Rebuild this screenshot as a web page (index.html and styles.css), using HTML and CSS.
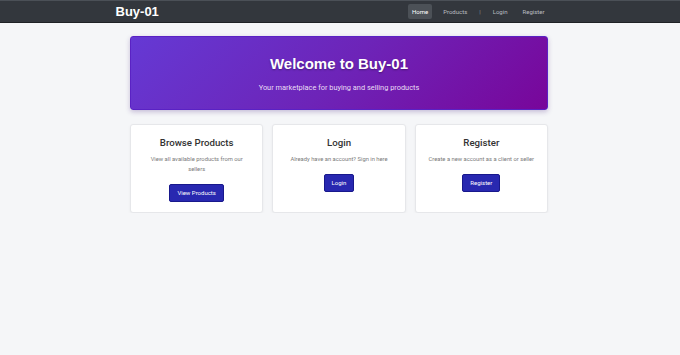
FILE: index.html
```html
<!DOCTYPE html>
<html lang="en">
<head>
    <meta charset="UTF-8">
    <meta name="viewport" content="width=device-width, initial-scale=1.0">
    <title>Buy-01</title>
    <link rel="stylesheet" href="styles.css">
</head>
<body>
    <header class="navbar">
        <div class="nav-inner">
            <a class="brand" href="#">Buy-01</a>
            <nav class="nav-links">
                <a class="active" href="#">Home</a>
                <a href="#">Products</a>
                <span class="sep">|</span>
                <a href="#">Login</a>
                <a href="#">Register</a>
            </nav>
        </div>
    </header>

    <main class="container">
        <section class="hero">
            <h1>Welcome to Buy-01</h1>
            <p>Your marketplace for buying and selling products</p>
        </section>

        <section class="cards">
            <div class="card">
                <h3>Browse Products</h3>
                <p>View all available products from our sellers</p>
                <a class="btn" href="#">View Products</a>
            </div>
            <div class="card">
                <h3>Login</h3>
                <p>Already have an account? Sign in here</p>
                <a class="btn" href="#">Login</a>
            </div>
            <div class="card">
                <h3>Register</h3>
                <p>Create a new account as a client or seller</p>
                <a class="btn" href="#">Register</a>
            </div>
        </section>
    </main>
</body>
</html>
```

FILE: styles.css
```css
* {
    box-sizing: border-box;
}

body {
    margin: 0;
    background-color: #f5f6f8;
    font-family: Roboto, "Liberation Sans", Arial, sans-serif;
    color: #333;
}

a {
    text-decoration: none;
}

.navbar {
    background-color: #33373d;
    border-top: 1px solid #4b5057;
    border-bottom: 1px solid #1f2226;
    height: 23px;
}

.nav-inner {
    width: 437px;
    margin: 0 auto;
    height: 100%;
    display: flex;
    align-items: center;
    justify-content: space-between;
    transform: translateX(-6px);
}

.brand {
    color: #fff;
    font-family: "Liberation Sans", Arial, sans-serif;
    font-weight: bold;
    font-size: 13px;
}

.nav-links {
    display: flex;
    align-items: center;
    gap: 7px;
    font-size: 6px;
    margin-right: 4px;
}

.nav-links a {
    color: #b9bcc0;
    padding: 4px 4px;
    border-radius: 2px;
}

.nav-links a.active {
    color: #fff;
    background-color: #4c5157;
}

.nav-links .sep {
    color: #8a8e93;
    margin: 0 1px;
}

.container {
    width: 418px;
    margin: 13px auto 0;
    transform: translateX(-1px);
}

.hero {
    height: 74px;
    background: linear-gradient(135deg, #6539d4 0%, #6d24b8 50%, #78069a 100%);
    border: 1px solid #5a22c4;
    border-radius: 3px;
    box-shadow: 0 2px 5px rgba(60, 20, 120, 0.25);
    color: #fff;
    text-align: center;
    padding-top: 18px;
}

.hero h1 {
    margin: 0 0 10px;
    font-family: "Liberation Sans", Arial, sans-serif;
    font-size: 15px;
    line-height: 18px;
    font-weight: bold;
    text-shadow: 0 1px 2px rgba(0, 0, 0, 0.35);
}

.hero p {
    margin: 0;
    font-size: 7.4px;
    line-height: 10px;
    color: #eadff5;
}

.cards {
    display: grid;
    grid-template-columns: repeat(3, 1fr);
    gap: 9px;
    margin-top: 14px;
}

.card {
    height: 89px;
    display: flex;
    flex-direction: column;
    align-items: center;
    background-color: #fff;
    border: 1px solid #e6e7ea;
    border-radius: 3px;
    box-shadow: 0 1px 3px rgba(0, 0, 0, 0.05);
    text-align: center;
    padding: 12px 11px 0;
}

.card h3 {
    margin: 0 0 5px;
    font-size: 9.7px;
    line-height: 12px;
    font-weight: 500;
    color: #333;
}

.card p {
    margin: 0 0 10px;
    font-size: 5.8px;
    line-height: 10px;
    color: #7a7a7a;
}

.btn {
    display: block;
    height: 18px;
    background-color: #2828b0;
    border: 1px solid #18188c;
    border-radius: 2px;
    color: #fff;
    font-size: 6px;
    line-height: 16px;
    padding: 0 7px;
}
```
